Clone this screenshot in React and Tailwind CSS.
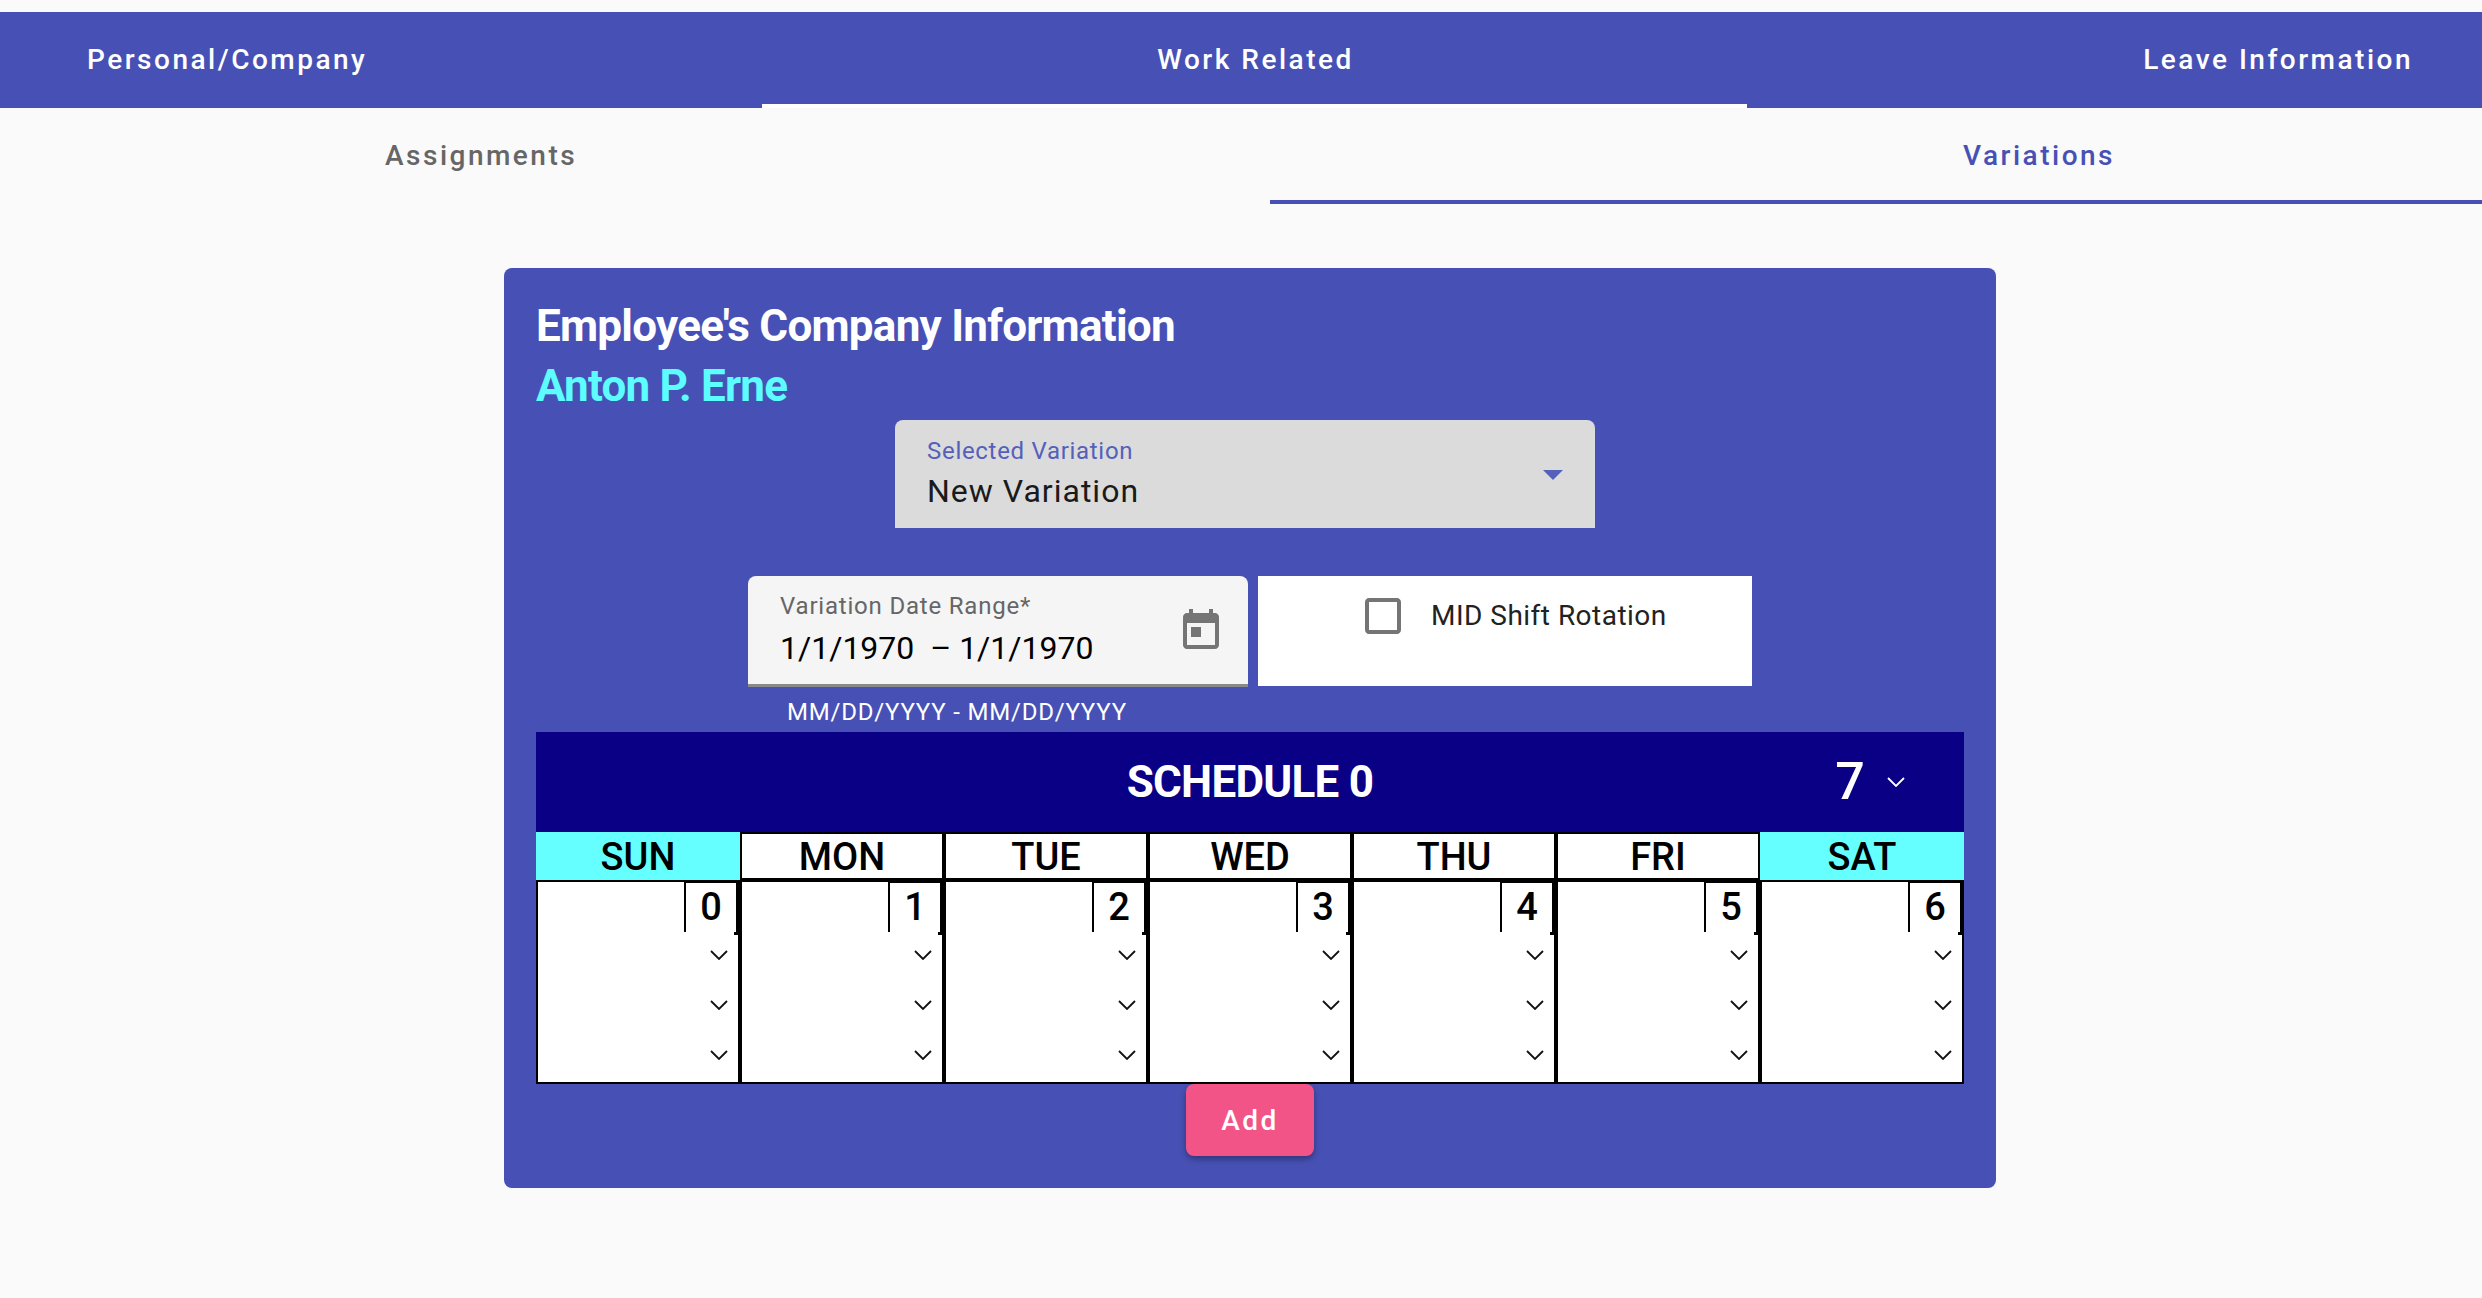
const DAYS = [
  { name: "SUN", weekend: true },
  { name: "MON" },
  { name: "TUE" },
  { name: "WED" },
  { name: "THU" },
  { name: "FRI" },
  { name: "SAT", weekend: true },
];

function Chevron({ className }) {
  return (
    <svg width="18" height="10" viewBox="0 0 18 10" fill="none" className={className}>
      <polyline points="1,1 9,9 17,1" stroke="currentColor" strokeWidth="1.8" />
    </svg>
  );
}

function DayCell({ index }) {
  return (
    <div className="h-[204px] border-2 border-black bg-white">
      <div className="flex justify-end">
        <div className="relative -mb-[2px] flex h-[50px] w-[54px] items-center justify-center border-t border-r-2 border-l-2 border-black text-[38px] font-medium text-black">
          {index}
          <span className="absolute -right-[2px] -bottom-[3px] h-[3px] w-[4px] bg-black" />
        </div>
      </div>
      {[0, 1, 2].map((row) => (
        <div key={row} className="flex h-[50px] items-center justify-end pr-[10px] text-[#111]">
          <Chevron />
        </div>
      ))}
    </div>
  );
}

export default function App() {
  return (
    <div className="min-h-[1298px] bg-[#fafafa] pt-3 font-['Roboto',sans-serif]">
      <div className="flex h-24 bg-[#4751b5] text-[28px] font-medium tracking-[2.5px] text-white">
        <div className="flex w-[762px] items-center pl-[87px]">Personal/Company</div>
        <div className="flex w-[985px] items-center justify-center border-b-4 border-white pt-1 pl-[2px]">Work Related</div>
        <div className="flex flex-1 items-center justify-end pr-[69px]">Leave Information</div>
      </div>

      <div className="flex h-24 text-[28px] font-medium tracking-[2.5px]">
        <div className="flex w-[1270px] items-center pl-[385px] text-[#666666]">Assignments</div>
        <div className="flex flex-1 items-center border-b-4 border-[#4751b5] pt-1 pl-[693px] text-[#4751b5]">Variations</div>
      </div>

      <div className="mt-16 ml-[504px] h-[920px] w-[1492px] rounded-lg bg-[#4751b5] px-8 pt-[28px]">
        <div className="text-[44px] leading-[60px] font-bold tracking-[-0.75px] text-white">Employee's Company Information</div>
        <div className="text-[44px] leading-[60px] font-bold tracking-[-0.8px] text-[#5cfcff]">Anton P. Erne</div>

        <div className="mt-[4px] ml-[359px] flex h-[108px] w-[700px] items-center justify-between rounded-t-lg bg-[#dbdbdb] pr-[13px] pl-8">
          <div>
            <div className="-mt-[2px] text-[24px] leading-[30px] tracking-[0.7px] text-[#5560bb]">Selected Variation</div>
            <div className="mt-[5px] text-[32px] leading-[40px] tracking-[1px] text-[#1a1a1a]">New Variation</div>
          </div>
          <svg width="48" height="48" viewBox="0 0 24 24" fill="#5560bb" className="mr-[5px]">
            <path d="M7 10l5 5 5-5z" />
          </svg>
        </div>

        <div className="mt-12 ml-[212px] flex gap-[10px]">
          <div className="flex h-[111px] w-[500px] items-center justify-between rounded-t-lg border-b-[3px] border-[#8a8a8a] bg-[#f5f5f5] pt-[2px] pr-[23px] pl-8">
            <div>
              <div className="text-[24px] leading-[30px] tracking-[0.8px] text-[#666666]">Variation Date Range*</div>
              <div className="mt-[4px] text-[32px] leading-[46px] tracking-[0px] whitespace-pre text-black">1/1/1970  – 1/1/1970</div>
            </div>
            <svg width="48" height="48" viewBox="0 0 24 24" fill="#757575">
              <path d="M19 3h-1V1h-2v2H8V1H6v2H5c-1.11 0-1.99.9-1.99 2L3 19c0 1.1.89 2 2 2h14c1.1 0 2-.9 2-2V5c0-1.1-.9-2-2-2zm0 16H5V8h14v11zM7 10h5v5H7z" />
            </svg>
          </div>
          <div className="flex h-[110px] w-[494px] items-start bg-white pt-4 pl-[101px]">
            <svg width="48" height="48" viewBox="0 0 24 24" fill="#757575">
              <path d="M19 5v14H5V5h14m0-2H5c-1.1 0-2 .9-2 2v14c0 1.1.9 2 2 2h14c1.1 0 2-.9 2-2V5c0-1.1-.9-2-2-2z" />
            </svg>
            <span className="ml-[24px] text-[28px] leading-[48px] tracking-[0.48px] text-[#222222]">MID Shift Rotation</span>
          </div>
        </div>

        <div className="ml-[251px] flex h-[45px] items-center pt-[5px] text-[24px] tracking-[0.8px] text-white">MM/DD/YYYY - MM/DD/YYYY</div>

        <div className="grid h-[100px] grid-cols-[1fr_auto_1fr] items-center bg-[#0a0085] text-white">
          <div />
          <div className="text-[44px] font-bold tracking-[-0.75px]">SCHEDULE 0</div>
          <div className="flex items-center pl-[462px]">
            <span className="text-[52px] font-medium">7</span>
            <Chevron className="ml-[22px]" />
          </div>
        </div>

        <div className="grid grid-cols-7">
          {DAYS.map((day) => (
            <div
              key={day.name}
              className={
                day.weekend
                  ? "flex h-12 items-center justify-center bg-[#66ffff] pt-[2px] text-[38px] font-medium text-black"
                  : "flex h-12 items-center justify-center border-2 border-black bg-white pt-[2px] text-[38px] font-medium text-black"
              }
            >
              {day.name}
            </div>
          ))}
        </div>

        <div className="grid grid-cols-7">
          {DAYS.map((day, i) => (
            <DayCell key={day.name} index={i} />
          ))}
        </div>

        <div className="flex justify-center">
          <button className="h-[72px] w-[128px] rounded-lg bg-[#f25487] pt-[2px] text-[28px] font-medium tracking-[2.5px] text-white shadow-[0_3px_6px_rgba(0,0,0,0.35)]">
            Add
          </button>
        </div>
      </div>
    </div>
  );
}
